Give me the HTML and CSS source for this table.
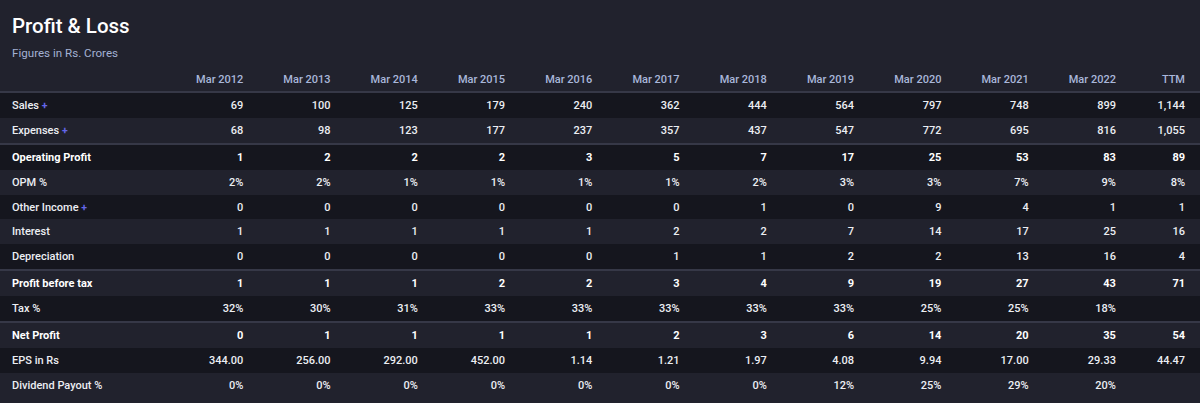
FILE: index.html
```html
<!DOCTYPE html>
<html>
<head>
<meta charset="utf-8">
<link rel="stylesheet" href="styles.css">
</head>
<body>
<section class="pl">
  <header class="pl-head">
    <h2 class="pl-title">Profit &amp; Loss</h2>
    <p class="pl-sub">Figures in Rs. Crores</p>
  </header>
  <table class="pl-table">
    <colgroup>
      <col class="c-label">
      <col class="c-yr"><col class="c-yr"><col class="c-yr"><col class="c-yr"><col class="c-yr"><col class="c-yr">
      <col class="c-yr"><col class="c-yr"><col class="c-yr"><col class="c-yr"><col class="c-yr">
      <col class="c-ttm">
    </colgroup>
    <thead>
      <tr>
        <th></th>
        <th>Mar 2012</th><th>Mar 2013</th><th>Mar 2014</th><th>Mar 2015</th><th>Mar 2016</th><th>Mar 2017</th>
        <th>Mar 2018</th><th>Mar 2019</th><th>Mar 2020</th><th>Mar 2021</th><th>Mar 2022</th><th>TTM</th>
      </tr>
    </thead>
    <tbody>
      <tr class="dark">
        <td>Sales <span class="plus">+</span></td>
        <td>69</td><td>100</td><td>125</td><td>179</td><td>240</td><td>362</td><td>444</td><td>564</td><td>797</td><td>748</td><td>899</td><td>1,144</td>
      </tr>
      <tr>
        <td>Expenses <span class="plus">+</span></td>
        <td>68</td><td>98</td><td>123</td><td>177</td><td>237</td><td>357</td><td>437</td><td>547</td><td>772</td><td>695</td><td>816</td><td>1,055</td>
      </tr>
      <tr class="dark strong sep">
        <td>Operating Profit</td>
        <td>1</td><td>2</td><td>2</td><td>2</td><td>3</td><td>5</td><td>7</td><td>17</td><td>25</td><td>53</td><td>83</td><td>89</td>
      </tr>
      <tr>
        <td>OPM %</td>
        <td>2%</td><td>2%</td><td>1%</td><td>1%</td><td>1%</td><td>1%</td><td>2%</td><td>3%</td><td>3%</td><td>7%</td><td>9%</td><td>8%</td>
      </tr>
      <tr class="dark">
        <td>Other Income <span class="plus">+</span></td>
        <td>0</td><td>0</td><td>0</td><td>0</td><td>0</td><td>0</td><td>1</td><td>0</td><td>9</td><td>4</td><td>1</td><td>1</td>
      </tr>
      <tr>
        <td>Interest</td>
        <td>1</td><td>1</td><td>1</td><td>1</td><td>1</td><td>2</td><td>2</td><td>7</td><td>14</td><td>17</td><td>25</td><td>16</td>
      </tr>
      <tr class="dark">
        <td>Depreciation</td>
        <td>0</td><td>0</td><td>0</td><td>0</td><td>0</td><td>1</td><td>1</td><td>2</td><td>2</td><td>13</td><td>16</td><td>4</td>
      </tr>
      <tr class="strong sep">
        <td>Profit before tax</td>
        <td>1</td><td>1</td><td>1</td><td>2</td><td>2</td><td>3</td><td>4</td><td>9</td><td>19</td><td>27</td><td>43</td><td>71</td>
      </tr>
      <tr class="dark">
        <td>Tax %</td>
        <td>32%</td><td>30%</td><td>31%</td><td>33%</td><td>33%</td><td>33%</td><td>33%</td><td>33%</td><td>25%</td><td>25%</td><td>18%</td><td></td>
      </tr>
      <tr class="strong sep">
        <td>Net Profit</td>
        <td>0</td><td>1</td><td>1</td><td>1</td><td>1</td><td>2</td><td>3</td><td>6</td><td>14</td><td>20</td><td>35</td><td>54</td>
      </tr>
      <tr class="dark">
        <td>EPS in Rs</td>
        <td>344.00</td><td>256.00</td><td>292.00</td><td>452.00</td><td>1.14</td><td>1.21</td><td>1.97</td><td>4.08</td><td>9.94</td><td>17.00</td><td>29.33</td><td>44.47</td>
      </tr>
      <tr>
        <td>Dividend Payout %</td>
        <td>0%</td><td>0%</td><td>0%</td><td>0%</td><td>0%</td><td>0%</td><td>0%</td><td>12%</td><td>25%</td><td>29%</td><td>20%</td><td></td>
      </tr>
    </tbody>
  </table>
</section>
</body>
</html>
```

FILE: styles.css
```css
html, body {
  margin: 0;
  padding: 0;
  background: #21222d;
}

body {
  font-family: Roboto, Inter, "Liberation Sans", sans-serif;
  color: #eceef3;
  overflow: hidden;
}

.pl-head {
  padding: 14px 12px 0 12px;
}

.pl-title {
  margin: 0;
  font-size: 20.5px;
  line-height: 24px;
  font-weight: 500;
  color: #ffffff;
}

.pl-sub {
  margin: 7px 0 0 0;
  font-size: 11.6px;
  line-height: 16px;
  color: #a3b1d3;
}

.pl-table {
  width: 1200px;
  table-layout: fixed;
  border-collapse: collapse;
  margin-top: 4px;
  font-size: 11px;
}

.c-label { width: 171px; }
.c-yr { width: 87.27px; }
.c-ttm { width: 69px; }

.pl-table th {
  font-weight: 500;
  color: #a9b7da;
  text-align: right;
  vertical-align: middle;
  padding: 2px 15px 0 0;
  height: 24px;
  border-bottom: 2px solid #363847;
}

.pl-table td {
  height: 24.9px;
  padding: 0 15px 0 0;
  text-align: right;
  white-space: nowrap;
  color: #eceef3;
  font-weight: 500;
}

.pl-table td:first-child {
  text-align: left;
  padding-left: 12px;
}

.pl-table tr.dark td {
  background: #15161e;
}

.pl-table tr.strong td {
  font-weight: 700;
  color: #ffffff;
}

.pl-table tr.sep td {
  border-top: 2px solid #363847;
}

.plus {
  color: #6466e8;
  font-weight: 700;
  font-size: 10.5px;
}
```
